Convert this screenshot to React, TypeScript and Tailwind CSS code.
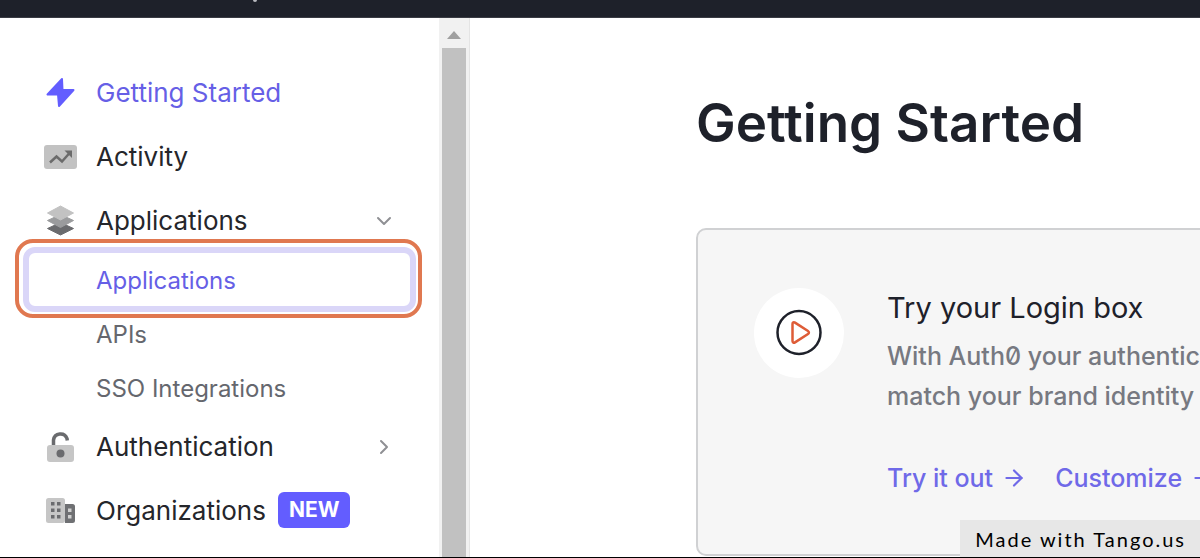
import type { ReactNode } from "react";
import clsx from "clsx";
import { ArrowRight, ChevronDown, ChevronRight } from "lucide-react";

function BoltIcon() {
  return (
    <svg width="32" height="32" viewBox="0 0 32 32" fill="#635dff" stroke="#635dff" strokeWidth="2" strokeLinejoin="round">
      <path d="M18 3 3.500 18.500H14L15 30 29.500 14H18.500z" />
    </svg>
  );
}

function ActivityIcon() {
  return (
    <svg width="34" height="32" viewBox="0 0 34 32" fill="none">
      <rect x="0" y="5" width="33" height="24" rx="3" fill="#c2c2c2" />
      <path d="M6 22.500l6.500-6 5.500 5 8-9" stroke="#6b6b6b" strokeWidth="2.500" />
      <path d="M20.500 10.500H28v7.500z" fill="#6b6b6b" />
    </svg>
  );
}

function LayersIcon() {
  return (
    <svg width="32" height="32" viewBox="0 0 32 32" strokeWidth="1" strokeLinejoin="round">
      <path d="M16.500 18.500l13 6-13 6.500-13-6.500z" fill="#6a6b6e" stroke="#6a6b6e" />
      <path d="M16.500 10.500l13 6-13 7-13-7z" fill="#9a9b9d" stroke="#9a9b9d" />
      <path d="M16.500 2l13 7-13 7-13-7z" fill="#c2c2c2" stroke="#c2c2c2" />
    </svg>
  );
}

function LockIcon() {
  return (
    <svg width="32" height="32" viewBox="0 0 32 32" fill="none">
      <path d="M9.500 16V10a7 7 0 0 1 13.500-1.500l.3 2" stroke="#6a6b6e" strokeWidth="3.500" />
      <rect x="3" y="15" width="27" height="17" rx="3" fill="#c6c6c6" />
      <circle cx="16.500" cy="23.500" r="4" fill="#6a6b6e" />
    </svg>
  );
}

function BuildingIcon() {
  return (
    <svg width="32" height="32" viewBox="0 0 32 32">
      <rect x="2" y="4" width="19" height="25" rx="2.500" fill="#c6c6c6" />
      <path d="M21 10h7.500a2.500 2.500 0 0 1 2.500 2.500v14a2.500 2.500 0 0 1-2.500 2.500H21z" fill="#6f7073" />
      <path
        d="M7 8h3.500v3.500H7zM13 8h3.500v3.500H13zM7 14.500h3.500V18H7zM13 14.500h3.500V18H13zM7 21h3.500v3.500H7zM13 21h3.500v3.500H13z"
        fill="#6a6b6e"
      />
      <path d="M24 14.500h3.500V18H24zM24 21h3.500v3.500H24z" fill="#d0d0d0" />
    </svg>
  );
}

type NavItemProps = {
  icon: ReactNode;
  label: string;
  active?: boolean;
  badge?: string;
  trailing?: ReactNode;
  children?: ReactNode;
};

function NavItem({ icon, label, active, badge, trailing, children }: NavItemProps) {
  return (
    <li>
      <a
        href="#"
        className={clsx(
          "flex h-16 items-center pr-[43px] pb-0.5 pl-11 text-[26px]",
          active ? "text-[#665fe6]" : "text-[#25262b]"
        )}
      >
        <span className="flex w-[52px] shrink-0">{icon}</span>
        <span>{label}</span>
        {badge && (
          <span className="ml-3 flex h-9 items-center rounded-md bg-[#635dff] px-[11px] text-[21px] font-bold text-white">
            {badge}
          </span>
        )}
        {trailing && <span className="ml-auto pt-0.5 text-[#8f9094]">{trailing}</span>}
      </a>
      {children}
    </li>
  );
}

function SubItem({ label, highlighted }: { label: string; highlighted?: boolean }) {
  return (
    <li className="relative">
      {/* Focus ring around the current step */}
      {highlighted && (
        <span className="absolute -top-3.5 right-[17px] -bottom-[11px] left-[15px] rounded-[18px] border-4 border-[#e07850] bg-white pt-1 pr-0.5 pb-0.5 pl-1">
          <span className="block h-full rounded-xl border-[6px] border-[#dad6f8]" />
        </span>
      )}
      <a
        href="#"
        className={clsx(
          "relative flex h-[54px] items-center pt-0.5 pl-24 text-2xl",
          highlighted ? "text-[#665fe6]" : "text-[#65676e]"
        )}
      >
        {label}
      </a>
    </li>
  );
}

function Sidebar() {
  return (
    <nav className="w-[439px] shrink-0 pt-[43px] pb-3.5">
      <ul>
        <NavItem icon={<BoltIcon />} label="Getting Started" active />
        <NavItem icon={<ActivityIcon />} label="Activity" />
        <NavItem icon={<LayersIcon />} label="Applications" trailing={<ChevronDown size={24} strokeWidth={2} />}>
          <ul>
            <SubItem label="Applications" highlighted />
            <SubItem label="APIs" />
            <SubItem label="SSO Integrations" />
          </ul>
        </NavItem>
        <NavItem icon={<LockIcon />} label="Authentication" trailing={<ChevronRight size={24} strokeWidth={2} />} />
        <NavItem icon={<BuildingIcon />} label="Organizations" badge="NEW" />
      </ul>
    </nav>
  );
}

function ScrollTrack() {
  return (
    <div className="flex w-[31px] shrink-0 flex-col items-center border-r border-[#e4e4e4] bg-[#f1f1f1]">
      <div className="flex h-[30px] items-center pt-1">
        <svg width="14" height="8" viewBox="0 0 14 8" fill="#a0a0a0">
          <path d="M7 0l7 8H0z" />
        </svg>
      </div>
      <div className="w-6 flex-1 bg-[#c1c1c1]" />
    </div>
  );
}

function LoginBoxCard() {
  return (
    <section className="-mr-4 flex gap-[43px] rounded-[10px] border-2 border-[#d0d1d3] bg-[#f6f6f6] pt-[58px] pb-14 pl-14 whitespace-nowrap">
      <div className="flex size-[90px] shrink-0 items-center justify-center rounded-full bg-white">
        <svg width="48" height="48" viewBox="0 0 48 48" fill="none" strokeLinejoin="round">
          <circle cx="24" cy="23.500" r="21.500" stroke="#1e212a" strokeWidth="2.500" />
          <path
            d="M17.500 15c0-1.500 1.300-2.200 2.500-1.400l13 8.400c1.200.8 1.200 2.200 0 3l-13 8.400c-1.200.8-2.500.1-2.500-1.400z"
            stroke="#de5c37"
            strokeWidth="2.500"
          />
        </svg>
      </div>
      <div>
        <h2 className="text-[29px] leading-10 text-[#1e212a]">Try your Login box</h2>
        <p className="mt-2 text-[25px] leading-10 font-medium text-[#777981] slashed-zero">
          With Auth0 your authentic
          <br />
          match your brand identity
        </p>
        <div className="mt-[42px] flex gap-7 text-[25px] leading-10 font-medium text-[#6f69e8]">
          <a href="#" className="flex items-center gap-2">
            Try it out <ArrowRight size={26} strokeWidth={2} />
          </a>
          <a href="#" className="flex items-center gap-2">
            Customize <ArrowRight size={26} strokeWidth={2} />
          </a>
        </div>
      </div>
    </section>
  );
}

export default function App() {
  return (
    <div className="relative overflow-hidden border-b border-black bg-white font-['Inter',sans-serif]">
      <header className="h-[18px] border-b border-[#3a3c44] bg-[#1e212a] pl-[253px]">
        <div className="h-0.5 w-1 rounded-b-full bg-[#b9bac0]" />
      </header>
      <div className="flex">
        <Sidebar />
        <ScrollTrack />
        <main className="min-w-0 flex-1 pt-[73px] pl-[226px]">
          <h1 className="mb-[73px] text-[53px] leading-16 font-semibold text-[#1e212a]">Getting Started</h1>
          <LoginBoxCard />
        </main>
      </div>
      <footer className="absolute right-0 -bottom-px flex h-[38px] items-center bg-[#e7e7e7] pr-3.5 pl-[15px] font-['Lato',sans-serif] text-xl tracking-widest text-black">
        Made with Tango.us
      </footer>
    </div>
  );
}
